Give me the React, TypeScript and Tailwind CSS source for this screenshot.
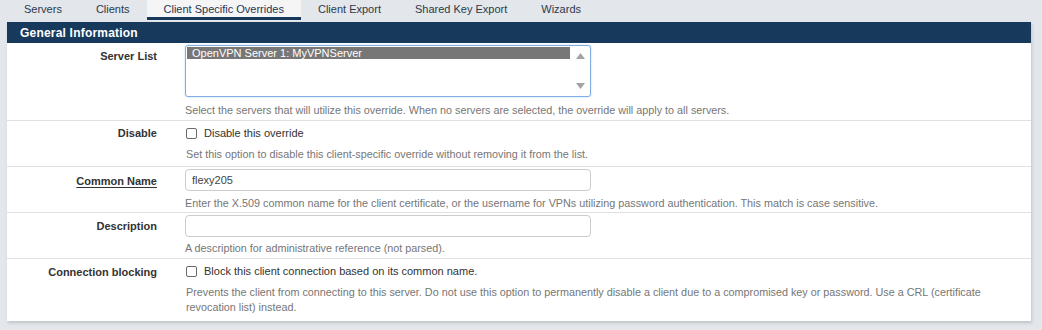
import React from "react";

const tabs = ["Servers", "Clients", "Client Specific Overrides", "Client Export", "Shared Key Export", "Wizards"];

function Checkbox() {
  return <span className="mt-[2px] inline-block h-[11px] w-[11px] shrink-0 rounded-[2px] border border-[#6b6b6b] bg-white" />;
}

function Help({ children }: { children: React.ReactNode }) {
  return <div className="text-[10.8px] leading-[15px] text-[#767676]">{children}</div>;
}

export default function App() {
  return (
    <div className="h-[330px] w-[1042px] bg-[#e3e6ea] text-[#333]" style={{ fontFamily: '"Liberation Sans", Arial, sans-serif' }}>
      <div className="flex h-[22px] pl-[7px]">
        {tabs.map((t, i) => (
          <div
            key={t}
            className={
              i === 2
                ? "h-[20px] border-b-[3px] border-[#173a5c] bg-[#f5f5f5] px-[17px] pt-[2px] text-[11px] leading-[14px] text-[#1d3557]"
                : "h-[20px] px-[17px] pt-[2px] text-[11px] leading-[14px] text-[#2b3a4a]"
            }
          >
            {t}
          </div>
        ))}
      </div>
      <div className="mx-[7px] w-[1024px] bg-white shadow-[1px_2px_3px_rgba(0,0,0,0.15)]">
        <div className="flex h-[21px] items-center bg-[#173a5c] pl-[13px] text-[12px] font-bold tracking-[0.2px] text-white">
          General Information
        </div>
        {/* Server List */}
        <div className="flex h-[78px] border-b border-[#e0e0e0]">
          <div className="w-[150px] pt-[6px] text-right text-[11px] font-bold leading-[14px]">Server List</div>
          <div className="ml-[28px] pt-[2px]">
            <div className="relative h-[52px] w-[406px] rounded-[3px] border border-[#7eaee3] bg-white shadow-[0_0_2px_rgba(102,175,233,0.5)]">
              <div className="ml-[1px] mt-[1px] h-[12px] w-[383px] bg-[#777] pl-[5px] text-[11px] leading-[12px] text-white">
                OpenVPN Server 1: MyVPNServer
              </div>
              <div className="absolute right-[1px] top-[1px] flex h-[48px] w-[17px] flex-col items-center justify-between bg-white py-[6px]">
                <svg width="9" height="6" viewBox="0 0 9 6"><path d="M4.5 0 L9 6 L0 6 Z" fill="#a3a3a3" /></svg>
                <svg width="9" height="6" viewBox="0 0 9 6"><path d="M0 0 L9 0 L4.5 6 Z" fill="#a3a3a3" /></svg>
              </div>
            </div>
            <div className="mt-[6px]">
              <Help>Select the servers that will utilize this override. When no servers are selected, the override will apply to all servers.</Help>
            </div>
          </div>
        </div>
        {/* Disable */}
        <div className="flex h-[46px] border-b border-[#e0e0e0]">
          <div className="w-[150px] pt-[5px] text-right text-[11px] font-bold leading-[14px]">Disable</div>
          <div className="ml-[29px] pt-[5px]">
            <div className="flex items-start gap-[7px] text-[11px] leading-[14px] text-[#333]">
              <Checkbox />
              <span>Disable this override</span>
            </div>
            <div className="mt-[7px]">
              <Help>Set this option to disable this client-specific override without removing it from the list.</Help>
            </div>
          </div>
        </div>
        {/* Common Name */}
        <div className="flex h-[46px] border-b border-[#e0e0e0]">
          <div className="w-[150px] pt-[7px] text-right text-[11px] font-bold leading-[14px]">
            <span className="underline decoration-1 underline-offset-2">Common Name</span>
          </div>
          <div className="ml-[28px] pt-[2px]">
            <div className="flex h-[22px] w-[406px] items-center rounded-[4px] border border-[#cccccc] pl-[6px] text-[11px] text-[#444]">
              flexy205
            </div>
            <div className="mt-[5px]">
              <Help>Enter the X.509 common name for the client certificate, or the username for VPNs utilizing password authentication. This match is case sensitive.</Help>
            </div>
          </div>
        </div>
        {/* Description */}
        <div className="flex h-[46px] border-b border-[#e0e0e0]">
          <div className="w-[150px] pt-[6px] text-right text-[11px] font-bold leading-[14px]">Description</div>
          <div className="ml-[28px] pt-[2px]">
            <div className="h-[22px] w-[406px] rounded-[4px] border border-[#cccccc]" />
            <div className="mt-[4px]">
              <Help>A description for administrative reference (not parsed).</Help>
            </div>
          </div>
        </div>
        {/* Connection blocking */}
        <div className="flex h-[62px]">
          <div className="w-[150px] pt-[6px] text-right text-[11px] font-bold leading-[14px]">Connection blocking</div>
          <div className="ml-[29px] pt-[5px]">
            <div className="flex items-start gap-[7px] text-[11px] leading-[14px] text-[#333]">
              <Checkbox />
              <span>Block this client connection based on its common name.</span>
            </div>
            <div className="mt-[7px] w-[820px]">
              <Help>
                Prevents the client from connecting to this server. Do not use this option to permanently disable a client due to a compromised key or password. Use a CRL (certificate revocation list) instead.
              </Help>
            </div>
          </div>
        </div>
      </div>
    </div>
  );
}
